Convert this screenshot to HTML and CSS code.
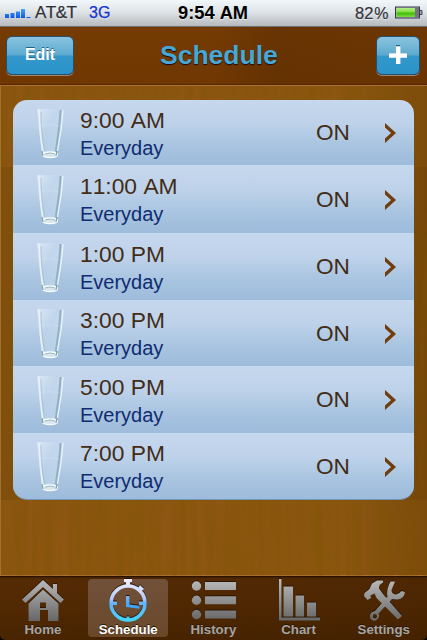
FILE: index.html
```
<!DOCTYPE html>
<html lang="en">
<head>
<meta charset="utf-8">
<title>Schedule</title>
<link rel="stylesheet" href="styles.css">
</head>
<body>
<svg class="defs" width="0" height="0" aria-hidden="true">
  <defs>
    <linearGradient id="silver" gradientUnits="userSpaceOnUse" x1="0" y1="0" x2="0" y2="44"><stop offset="0" stop-color="#bbb"/><stop offset="1" stop-color="#626262"/></linearGradient>
    <linearGradient id="blue" gradientUnits="userSpaceOnUse" x1="0" y1="0" x2="0" y2="44"><stop offset="0" stop-color="#f2efff"/><stop offset=".45" stop-color="#b6ccf6"/><stop offset=".55" stop-color="#62b2fa"/><stop offset="1" stop-color="#3fd9ff"/></linearGradient>
    <linearGradient id="hand" x1="0" y1="0" x2="0" y2="1"><stop offset="0" stop-color="#7db4f5"/><stop offset="1" stop-color="#35a0f5"/></linearGradient>
    <linearGradient id="bars" x1="0" y1="0" x2="0" y2="1"><stop offset="0" stop-color="#45a4ff"/><stop offset="1" stop-color="#0a55e8"/></linearGradient>
    <linearGradient id="charge" x1="0" y1="0" x2="0" y2="1"><stop offset="0" stop-color="#b4ec8c"/><stop offset=".45" stop-color="#7fe03c"/><stop offset=".55" stop-color="#3db80c"/><stop offset="1" stop-color="#7cdc3c"/></linearGradient>
    <linearGradient id="glassFill" x1="0" y1="0" x2="1" y2="1"><stop offset="0" stop-color="#e3eef8" stop-opacity=".8"/><stop offset=".4" stop-color="#c3d7ec" stop-opacity=".5"/><stop offset="1" stop-color="#d3e5f3" stop-opacity=".5"/></linearGradient>
    <filter id="soft" x="-20%" y="-10%" width="140%" height="120%"><feGaussianBlur stdDeviation=".45"/></filter>
    <filter id="grain" x="0" y="0" width="100%" height="100%"><feTurbulence type="fractalNoise" baseFrequency=".13 .006" numOctaves="3" seed="4"/><feColorMatrix values="0 0 0 0 .2  0 0 0 0 .09  0 0 0 0 0  1.4 0 0 0 -.42"/></filter>
    <symbol id="glass" viewBox="0 0 30 54">
      <path d="M2 2H28L22 48Q15 53 7 48Z" fill="url(#glassFill)"/>
      <g filter="url(#soft)" fill="none">
        <path d="M4 3C4.500 18 6 34 8 46" stroke="#e6f0f7" stroke-width="1.800"/>
        <path d="M6 5C6 20 8 34 9.500 44" stroke="#a0bbcb" stroke-width=".7"/>
        <path d="M25.500 3C25 18 22 34 20.800 45" stroke="#8fb1c4" stroke-width="2"/>
        <path d="M28 3C27 18 24.500 34 22.500 44" stroke="#eef5fa" stroke-width="1.200"/>
        <path d="M2 20Q12 16 24 19" stroke="#d0e0ee" stroke-width=".6"/>
        <ellipse cx="15" cy="47.800" rx="7.500" ry="2.800" fill="#d8e7ef" stroke="#f8fbfb" stroke-width="1.300"/>
        <path d="M7 44L8 49M22 44L21 49" stroke="#7f9fa6" stroke-width="1.200"/>
        <path d="M10 47Q15 45 20 47" stroke="#92adb8" stroke-width=".8"/>
      </g>
    </symbol>
    <symbol id="chevron" viewBox="0 0 12 22"><path d="M0 1L11 11L0 21V16.600L6.100 11L0 5.400Z" fill="#713d0c"/></symbol>
  </defs>
</svg>
<div class="phone">
  <header class="status">
    <svg class="signal" width="26" height="10" viewBox="0 0 26 10"><path d="M0 5h4v4H0zM5.500 4h4v5h-4zM11 2.500h4V9h-4zM16 0h4v9h-4zM21.500 8h4v1h-4z" fill="url(#bars)"/></svg>
    <span class="carrier">AT&amp;T</span>
    <span class="network">3G</span>
    <span class="clock">9:54 AM</span>
    <span class="percent">82<i>%</i></span>
    <svg class="battery" width="28" height="14" viewBox="0 0 28 14"><rect x=".5" y="1" width="24" height="11" fill="#bbb8c3" stroke="#34344a"/><rect x="1.500" y="2" width="18.500" height="9" fill="url(#charge)"/><path d="M20 2h4v9h-4z" fill="#77727e"/><path d="M25 4.500h2v4h-2" fill="#aaa" stroke="#44445a"/></svg>
  </header>
  <nav class="navbar">
    <button class="btn edit">Edit</button>
    <h1>Schedule</h1>
    <button class="btn add" aria-label="Add"><svg width="20" height="20" viewBox="0 0 20 20"><path d="M8 0h4v8h7v4h-7v7H8v-7H1V8h7z" fill="#25628a"/><path d="M8 1.300h4.400V8.300H19v4.400h-6.600V19H8v-6.300H1V8.300h7z" fill="#fff"/></svg></button>
  </nav>
  <main>
    <svg class="wood" width="427" height="490" aria-hidden="true"><rect width="427" height="490" filter="url(#grain)"/></svg>
    <ul class="list">
      <li><svg class="glass"><use href="#glass"/></svg><div class="when"><b>9:00 AM</b><span>Everyday</span></div><em>ON</em><svg class="chev"><use href="#chevron"/></svg></li>
      <li><svg class="glass"><use href="#glass"/></svg><div class="when"><b>11:00 AM</b><span>Everyday</span></div><em>ON</em><svg class="chev"><use href="#chevron"/></svg></li>
      <li><svg class="glass"><use href="#glass"/></svg><div class="when"><b>1:00 PM</b><span>Everyday</span></div><em>ON</em><svg class="chev"><use href="#chevron"/></svg></li>
      <li><svg class="glass"><use href="#glass"/></svg><div class="when"><b>3:00 PM</b><span>Everyday</span></div><em>ON</em><svg class="chev"><use href="#chevron"/></svg></li>
      <li><svg class="glass"><use href="#glass"/></svg><div class="when"><b>5:00 PM</b><span>Everyday</span></div><em>ON</em><svg class="chev"><use href="#chevron"/></svg></li>
      <li><svg class="glass"><use href="#glass"/></svg><div class="when"><b>7:00 PM</b><span>Everyday</span></div><em>ON</em><svg class="chev"><use href="#chevron"/></svg></li>
    </ul>
  </main>
  <footer class="tabs">
    <a class="tab"><svg width="44" height="44" viewBox="0 0 44 44"><path d="M22 1L32 10V5h4v9L43 20.500L39.500 24L22 8L4.500 24L1 20.500Z" fill="url(#silver)"/><path d="M22 10.500L37.500 24.500V42H27V31H19V42H7.500V24.500ZM19 23.500V29H25V23.500Z" fill="url(#silver)" fill-rule="evenodd"/></svg><span>Home</span></a>
    <a class="tab active"><svg width="44" height="44" viewBox="0 0 44 44"><circle cx="22" cy="24" r="17" fill="none" stroke="url(#blue)" stroke-width="3.600"/><path d="M18 0h8v3h-2v5h-4V3h-2zM34 6l4 4-3 2.500-3-3zM5 22.500h6v3.500H5zM33 22.500h6v3.500h-6zM20.500 37.500h3v4h-3z" fill="url(#blue)"/><path d="M20 17h3.500v8.500l10 1.200v3L20 28z" fill="url(#hand)"/></svg><span>Schedule</span></a>
    <a class="tab"><svg width="46" height="44" viewBox="-1 0 46 44"><g fill="url(#silver)"><circle cx="5.500" cy="7" r="4.700"/><circle cx="5.500" cy="21.300" r="4.700"/><circle cx="5.500" cy="35.500" r="4.700"/><path d="M14 3h31v8H14zM14 17.300h31v8H14zM14 31.500h31v8H14z"/></g></svg><span>History</span></a>
    <a class="tab"><svg width="44" height="44" viewBox="0 0 44 44"><path d="M2 0h2.500v38.500H43V41.500H2zM6.500 7.500h9.500v30H6.500zM18.500 16.500H27v21h-8.500zM30 23.500h9v14h-9z" fill="url(#silver)"/></svg><span>Chart</span></a>
    <a class="tab"><svg width="44" height="44" viewBox="0 0 44 44"><path d="M2 17L2.500 14L7.500 10L10 4.500L15 1.500H21V3.500Q16.500 5.500 17 9.500L21 15L40 37L36 40.500L14.500 19L12.500 14.500L8.500 16.500L9 19L5.500 21Z" fill="url(#silver)"/><path fill-rule="evenodd" d="M28.500 2.500L33 2.500L29.500 11Q29.500 15 34 15.500Q37 15 39.500 12L43 13Q42 20 35.500 20.500L30 20L16.500 34.500Q18.500 39 14 41.500Q9 42.500 8 38Q7.500 33 13 32L25.500 17.500Q24 11 28.500 2.500ZM12.800 35.100a2.100 2.100 0 1 0 .1 4.200a2.100 2.100 0 0 0-.1-4.200Z" fill="url(#silver)"/></svg><span>Settings</span></a>
  </footer>
</div>
</body>
</html>
```
FILE: styles.css
```
* { box-sizing: border-box; }
body { margin: 0; background: #000; font-family: "Liberation Sans", Arial, sans-serif; font-kerning: none; }
.defs { position: absolute; }
.phone { width: 427px; height: 640px; display: flex; flex-direction: column; overflow: hidden; background: #000; }
.status { height: 27px; flex: none; display: flex; align-items: center; padding: 0 4px 0 5px; border-bottom: 1px solid #6d6f75; background: linear-gradient(#f2f7fa, #dfe4e8 45%, #b6babd); font-size: 17px; line-height: 26px; text-shadow: 0 1px #fff9; white-space: nowrap; }
.signal { margin-top: 2px; flex: none; }
.carrier { width: 54px; padding-left: 4px; color: #303034; letter-spacing: -.5px; flex: none; -webkit-text-stroke: .25px; }
.network { width: 93px; padding-left: 4px; color: #1431d2; font-size: 16px; flex: none; -webkit-text-stroke: .25px; }
.clock { width: 177px; font-size: 18.300px; font-weight: bold; color: #000; flex: none; }
.percent { flex: 1; color: #333338; font-size: 16.500px; -webkit-text-stroke: .2px; }
.percent i { font-style: normal; margin-left: 1px; font-size: 16px; }
.battery { flex: none; }
.navbar { height: 59px; flex: none; display: flex; align-items: center; padding: 0 7px 2px 6px; border-bottom: 1px solid #b16f32; box-shadow: inset 0 -1px #512600; background: linear-gradient(90deg, transparent 50%, #43200044 65%, #43200022), linear-gradient(#753b03, #703702); }
.navbar h1 { margin: 0 auto 0 86px; font-size: 26.500px; line-height: 30px; font-weight: bold; color: #47a8d8; text-shadow: 0 1px 1px #160b02; white-space: nowrap; }
.btn { height: 39px; border: 1px solid #24506d; border-radius: 6px; padding: 0; color: #fff; font: bold 16px "Liberation Sans", Arial, sans-serif; background: linear-gradient(#8bc3df, #5caacf 49%, #3497c9 51%, #2b93cb); box-shadow: 0 1px #a28773; text-shadow: 0 -1px #25628a; }
.edit { width: 68px; font-size: 16px; }
.add { width: 44px; display: flex; align-items: center; justify-content: center; }
main { flex: 1; position: relative; padding: 14px 13px 0; border-left: 1px solid #a3702f; background: linear-gradient(90deg, #6f410800, #6f410800 80%, #5d350055), linear-gradient(transparent 81px, #54300033 81px, #54300033 414px, transparent 414px), #8d5612; }
.wood { position: absolute; left: 0; top: 0; opacity: .65; }
.list { position: relative; list-style: none; margin: 0 0 0 -1px; padding: 0; width: 401px; height: 400px; display: grid; grid-template-rows: 65px 68px 67px 66px 67px 66px; border-radius: 14px; overflow: hidden; border-bottom: 1px solid #7198b8; }
.list li { display: flex; align-items: center; border-top: 1px solid #c4daee; background: linear-gradient(#c6d7ed, #bed2ea 35%, #a8c4e0 70%, #9dbbdb); }
.glass { width: 30px; height: 54px; margin: 1px 0 0 22px; flex: none; }
.when { width: 236px; padding: 1px 0 0 15px; white-space: nowrap; }
.when b, .when span { display: block; }
.when b { font-weight: normal; font-size: 22.800px; line-height: 28px; color: #422c16; }
.when span { font-size: 20px; line-height: 28px; color: #0f2c70; }
.list em { font-style: normal; width: 69px; margin-left: 15px; font-size: 22.600px; line-height: 28px; color: #422c16; }
.chev { width: 12px; height: 22px; flex: none; }
.tabs { height: 65px; flex: none; display: flex; padding: 3px 0 3px; border-top: 1px solid #af713a; background: linear-gradient(90deg, #52280000, #35190033), linear-gradient(#3d1b00, #552b04 5%, #512902 50%, #482401); box-shadow: inset 0 1px #2b1200; border-radius: 0 0 5px 5px; }
.tab { width: 80px; margin-left: 5.200px; flex: none; display: flex; flex-direction: column; align-items: center; border-radius: 4px; color: #a5a5a5; font-size: 13.300px; font-weight: bold; }
.tab:first-child { margin-left: 3px; }
.tab svg { flex: none; filter: drop-shadow(0 -1px #291501); }
.tab span { line-height: 15px; margin-top: -1px; text-shadow: 0 -1px #291501; }
.active { background: linear-gradient(#71513a, #694829); color: #fff; }
```
